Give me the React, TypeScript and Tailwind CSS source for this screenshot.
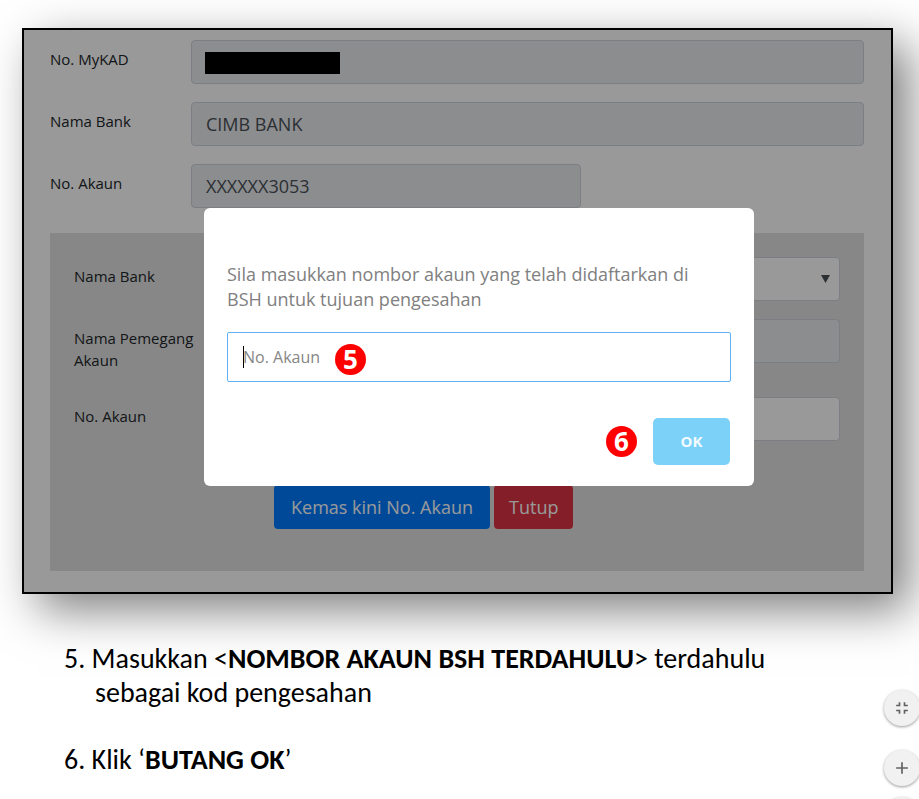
import type { ReactNode } from "react";
import { MdAdd, MdFullscreenExit, MdRemove } from "react-icons/md";

const labelClass = "w-[141px] shrink-0 py-2 text-[15px] leading-[22px] text-[#212529]";
const innerLabelClass = "w-[130px] shrink-0 py-2 text-[15px] leading-[22px] text-[#212529]";
const fieldClass = "h-11 w-full rounded border border-[#ced4da] px-[14px] text-lg text-[#495057]";

function Marker({ children }: { children: ReactNode }) {
  return (
    <span className="flex h-[31px] w-[31px] items-center justify-center rounded-full bg-[#ff0000] text-[26px] leading-[31px] font-bold text-white">
      {children}
    </span>
  );
}

function RoundButton({ label, children }: { label: string; children: ReactNode }) {
  return (
    <button
      type="button"
      aria-label={label}
      className="flex h-9 w-9 items-center justify-center rounded-full bg-[#f1f1f1] text-xl text-[#616161] shadow-[0_1px_3px_rgba(0,0,0,0.4)]"
    >
      {children}
    </button>
  );
}

function AccountForm() {
  return (
    <form className="pt-[10px] pr-[27px] pb-[21px] pl-[26px]">
      <div className="flex flex-col gap-[18px]">
        <div className="flex">
          <label htmlFor="mykad" className={labelClass}>No. MyKAD</label>
          <div className="relative flex-1">
            <input id="mykad" readOnly className={`${fieldClass} bg-[#e9ecef]`} />
            <span className="absolute top-3 left-[14px] h-[22px] w-[135px] bg-black"></span>
          </div>
        </div>
        <div className="flex">
          <label htmlFor="bank" className={labelClass}>Nama Bank</label>
          <div className="flex-1">
            <input id="bank" readOnly value="CIMB BANK" className={`${fieldClass} bg-[#e9ecef]`} />
          </div>
        </div>
        <div className="flex">
          <label htmlFor="akaun" className={labelClass}>No. Akaun</label>
          <div className="flex-1">
            <div className="w-[58%]">
              <input id="akaun" readOnly value="XXXXXX3053" className={`${fieldClass} bg-[#e9ecef]`} />
            </div>
          </div>
        </div>
      </div>

      <div className="mt-[25px] bg-[#e2e2e2] px-6 pt-6 pb-[42px]">
        <div className="flex flex-col gap-[18px]">
          <div className="flex">
            <label htmlFor="new-bank" className={innerLabelClass}>Nama Bank</label>
            <div className="relative flex-1">
              <select id="new-bank" className={`${fieldClass} appearance-none bg-white`}></select>
              <svg viewBox="0 0 9 8" className="pointer-events-none absolute top-[18px] right-[10px] h-2 w-[9px]">
                <path d="M0 0h9L4.5 8z" fill="#495057" />
              </svg>
            </div>
          </div>
          <div className="flex">
            <label htmlFor="holder" className={innerLabelClass}>Nama Pemegang Akaun</label>
            <div className="flex-1">
              <input id="holder" readOnly className={`${fieldClass} bg-[#e9ecef]`} />
            </div>
          </div>
          <div className="flex">
            <label htmlFor="new-akaun" className={innerLabelClass}>No. Akaun</label>
            <div className="flex-1">
              <input id="new-akaun" className={`${fieldClass} bg-white`} />
            </div>
          </div>
        </div>
        <div className="mt-11 flex gap-1 pl-[200px] text-lg text-white">
          <button type="button" className="h-11 rounded bg-[#007bff] px-[17px]">Kemas kini No. Akaun</button>
          <button type="button" className="h-11 rounded bg-[#dc3545] px-[15px]">Tutup</button>
        </div>
      </div>
    </form>
  );
}

function ConfirmDialog() {
  return (
    <div className="absolute inset-0 flex items-start justify-center bg-black/40 pt-[178px] pl-[43px]">
      <div role="dialog" aria-label="Pengesahan" className="w-[550px] rounded-md bg-white px-[23px] pt-[54px] pb-[21px]">
        <label htmlFor="confirm" className="block pr-6 text-lg leading-[25px] text-[#808080]">
          Sila masukkan nombor akaun yang telah didaftarkan di BSH untuk tujuan pengesahan
        </label>
        <div className="relative mt-5">
          <input
            id="confirm"
            placeholder="No. Akaun"
            className="block h-[50px] w-full rounded-xs border border-[#64b0f5] px-[15px] text-base placeholder:text-[#868686]"
          />
          <span className="absolute top-[14px] left-4 h-[22px] w-px bg-black"></span>
          <div className="absolute top-3 left-[108px]">
            <Marker>5</Marker>
          </div>
        </div>
        <div className="mt-9 flex items-center justify-end gap-4 pr-px">
          <Marker>6</Marker>
          <button type="button" className="h-[47px] w-[77px] rounded-[5px] bg-[#7cd1f9] text-[15px] font-bold text-[#f3fbff]">
            OK
          </button>
        </div>
      </div>
    </div>
  );
}

export default function App() {
  return (
    <main className="bg-white pt-7 font-['Open_Sans',sans-serif]">
      <section className="relative mr-[26px] ml-[22px] border-2 border-black bg-white shadow-[16px_16px_44px_rgba(0,0,0,0.5)]">
        <AccountForm />
        <ConfirmDialog />
      </section>

      <ol className="relative mt-12 ml-16 flex flex-col gap-[33px] font-['Carlito','Lato',sans-serif] text-[28px] leading-[34px] text-black">
        <li className="pl-[31px] -indent-[31px]">
          5. Masukkan &lt;<b>NOMBOR AKAUN BSH TERDAHULU</b>&gt; terdahulu
          <br />
          <span className="inline-block indent-0">sebagai kod pengesahan</span>
        </li>
        <li className="pl-[31px] -indent-[31px]">
          6. Klik ‘<b>BUTANG OK</b>’
        </li>
      </ol>

      <div className="fixed right-[-1px] bottom-[-34px] flex flex-col">
        <RoundButton label="Muatkan ke halaman"><MdFullscreenExit /></RoundButton>
        <div className="mt-6 flex flex-col gap-[11px]">
          <RoundButton label="Zum masuk"><MdAdd /></RoundButton>
          <RoundButton label="Zum keluar"><MdRemove /></RoundButton>
        </div>
      </div>
    </main>
  );
}
